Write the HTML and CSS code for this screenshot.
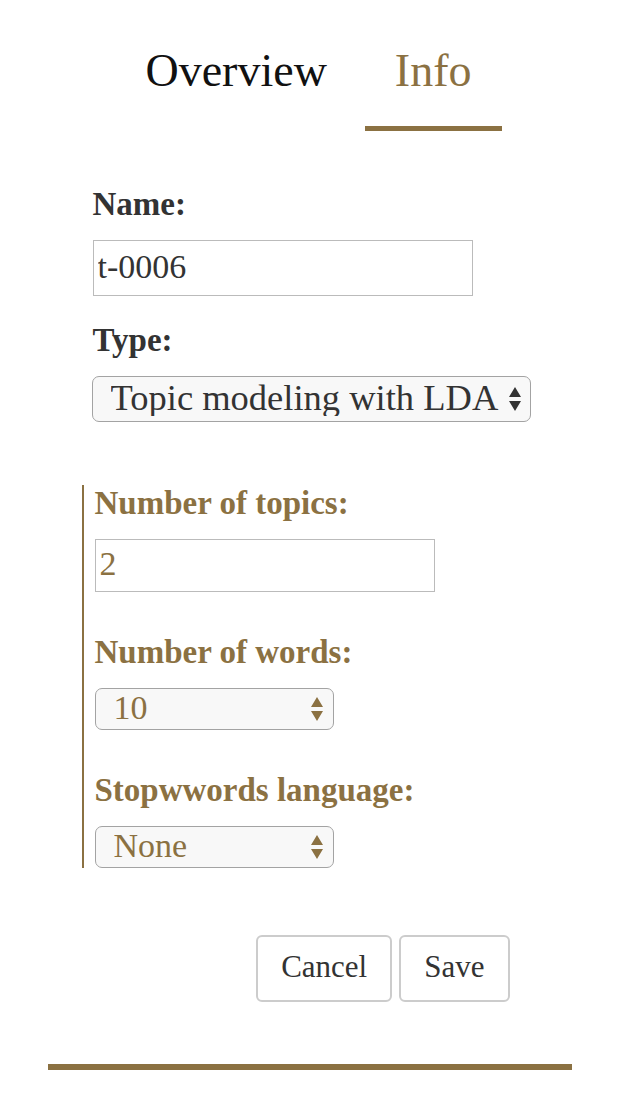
FILE: index.html
```html
<!DOCTYPE html>
<html lang="en">
<head>
<meta charset="utf-8">
<title>Info</title>
<link rel="stylesheet" href="styles.css">
</head>
<body>
<div class="page">
  <nav class="tabs">
    <a class="tab">Overview</a>
    <a class="tab tab-active">Info</a>
  </nav>
  <form class="form">
    <div class="field">
      <label class="label">Name:</label>
      <input class="input input-name" type="text" value="t-0006">
    </div>
    <div class="field field-type">
      <label class="label">Type:</label>
      <span class="select-wrap select-type">
        <select class="select">
          <option>Topic modeling with LDA</option>
        </select>
        <svg class="arrows" width="12" height="24" viewBox="0 0 12 24"><path d="M6 0 L12 10 L0 10 Z M0 14 L12 14 L6 24 Z" fill="#333"/></svg>
      </span>
    </div>
    <div class="params">
      <div class="field field-param">
        <label class="label label-accent">Number of topics:</label>
        <input class="input input-topics" type="text" value="2">
      </div>
      <div class="field field-param">
        <label class="label label-accent">Number of words:</label>
        <span class="select-wrap select-small">
          <select class="select select-accent">
            <option>10</option>
          </select>
          <svg class="arrows" width="12" height="24" viewBox="0 0 12 24"><path d="M6 0 L12 10 L0 10 Z M0 14 L12 14 L6 24 Z" fill="#8b7142"/></svg>
        </span>
      </div>
      <div class="field field-param field-last">
        <label class="label label-accent">Stopwwords language:</label>
        <span class="select-wrap select-small">
          <select class="select select-accent">
            <option>None</option>
          </select>
          <svg class="arrows" width="12" height="24" viewBox="0 0 12 24"><path d="M6 0 L12 10 L0 10 Z M0 14 L12 14 L6 24 Z" fill="#8b7142"/></svg>
        </span>
      </div>
    </div>
    <div class="actions">
      <button class="btn" type="button">Cancel</button>
      <button class="btn" type="button">Save</button>
    </div>
  </form>
  <hr class="rule">
</div>
</body>
</html>
```

FILE: styles.css
```css
html, body {
  margin: 0;
  padding: 0;
  background: #fff;
}
body {
  font-family: "Liberation Serif", "Times New Roman", serif;
  color: #333;
}
.page {
  width: 524px;
  margin: 0 auto;
  padding-left: 1px;
}
.tabs {
  display: flex;
  justify-content: center;
  gap: 8px;
  padding-top: 45px;
  margin-left: -2px;
}
.tab {
  font-size: 46px;
  line-height: 51px;
  padding: 0 30px 30px;
  color: #111;
  border-bottom: 5px solid transparent;
}
.tab-active {
  color: #8b7142;
  border-bottom-color: #8b7142;
}
.form {
  margin: 55px 0 0;
  padding-left: 45px;
}
.field {
  display: flex;
  flex-direction: column;
  align-items: flex-start;
  margin-bottom: 26px;
}
.field-type {
  margin-bottom: 0;
}
.field-param {
  margin-bottom: 42px;
}
.field-last {
  margin-bottom: 1px;
}
.label {
  font-weight: bold;
  font-size: 33px;
  line-height: 36px;
  margin-bottom: 18px;
  color: #333;
}
.label-accent {
  color: #8b7142;
}
.input {
  box-sizing: border-box;
  font-family: "Liberation Serif", "Times New Roman", serif;
  font-size: 34px;
  border: 1px solid #bbb;
  padding: 0 4px 3px;
  margin: 0;
  outline: none;
  background: #fff;
}
.input-name {
  width: 380px;
  height: 56px;
  color: #333;
}
.input-topics {
  width: 340px;
  height: 53px;
  color: #8b7142;
}
.select-wrap {
  position: relative;
  display: inline-block;
}
.select {
  appearance: none;
  -webkit-appearance: none;
  box-sizing: border-box;
  font-family: "Liberation Serif", "Times New Roman", serif;
  font-size: 36.5px;
  line-height: 1;
  color: #333;
  background: #f8f8f8;
  border: 1.5px solid #a3a3a3;
  border-radius: 7px;
  padding: 0 0 2px 18px;
  margin: 0;
}
.select-type {
  margin-left: -1px;
}
.select-type .select {
  width: 439px;
  height: 46px;
}
.select-small .select {
  width: 239px;
  height: 42px;
  font-size: 34px;
}
.select-accent {
  color: #8b7142;
}
.arrows {
  position: absolute;
  top: 50%;
  right: 10px;
  margin-top: -12px;
  pointer-events: none;
}
.select-small .arrows {
  right: 11px;
  margin-top: -12px;
}
.params {
  margin-top: 63px;
  margin-left: -11px;
  padding-left: 11px;
  border-left: 2px solid #8b7142;
}
.actions {
  display: flex;
  justify-content: flex-end;
  gap: 7px;
  margin-top: 67px;
  padding-right: 62px;
}
.btn {
  font-family: "Liberation Serif", "Times New Roman", serif;
  font-size: 31px;
  color: #333;
  background: #fff;
  border: 2px solid #ccc;
  border-radius: 6px;
  height: 67px;
  padding: 0 23px 4px;
  margin: 0;
}
.rule {
  margin: 62px 0 0;
  height: 6px;
  border: 0;
  background: #8b7142;
}
```
